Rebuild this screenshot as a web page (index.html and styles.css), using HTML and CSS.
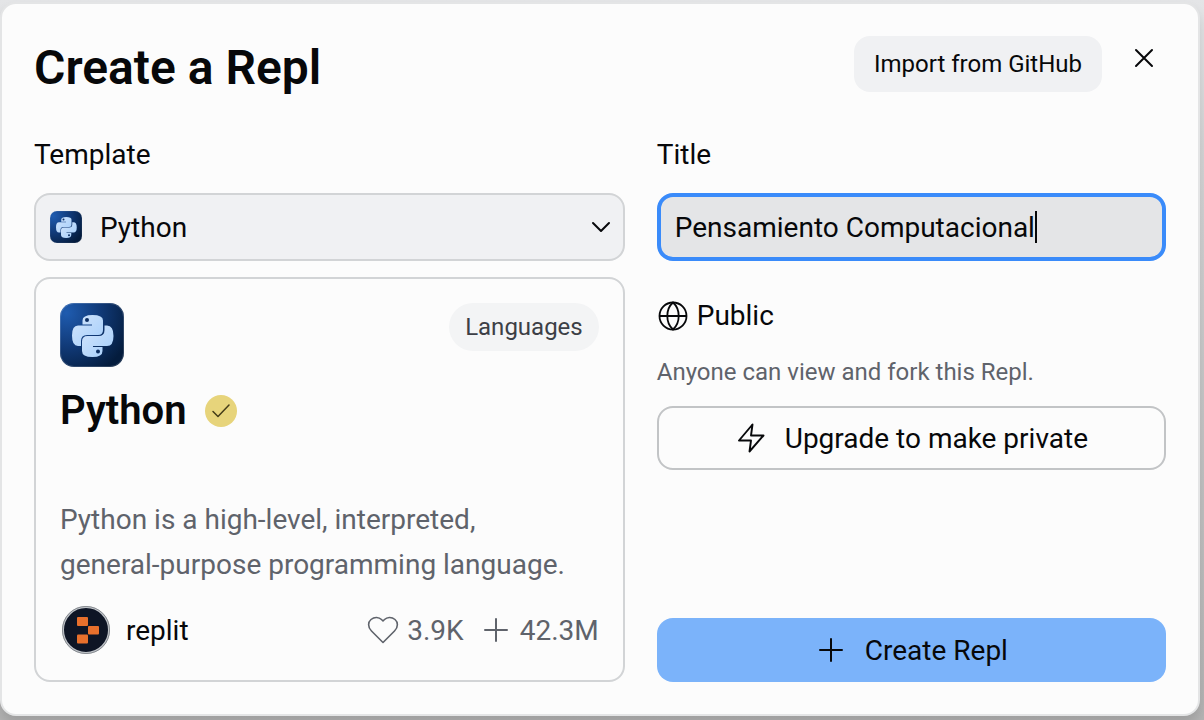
FILE: index.html
```html
<!DOCTYPE html>
<html lang="en">
<head>
<meta charset="utf-8">
<meta name="viewport" content="width=device-width, initial-scale=1">
<title>Create a Repl</title>
<link rel="stylesheet" href="styles.css">
</head>
<body>
<svg class="defs" aria-hidden="true">
  <defs>
    <radialGradient id="tile" cx="0.1" cy="0.15" r="1.05">
      <stop offset="0" stop-color="#1f5cb0"/>
      <stop offset="0.5" stop-color="#113a78"/>
      <stop offset="1" stop-color="#041c3d"/>
    </radialGradient>
    <linearGradient id="snake" x1="0" y1="0" x2="1" y2="1">
      <stop offset="0" stop-color="#d3e5fb"/>
      <stop offset="1" stop-color="#a4cefb"/>
    </linearGradient>
    <symbol id="python" viewBox="0 0 64 64">
      <rect width="64" height="64" rx="14" fill="url(#tile)"/>
      <rect x="0.5" y="0.5" width="63" height="63" rx="13.5" fill="none" stroke="#fff" stroke-opacity="0.16"/>
      <path fill="url(#snake)" d="M22.500 21.500V17.500Q22.500 12 32.500 12Q43 12 43 17.500V27Q43 32 38 32H27Q21 32 21 38V43H18Q12 43 12 32.500Q12 22.500 18 22.500H32V21.500Z"/>
      <path fill="url(#snake)" d="M44.500 22.500H47Q53.500 22.500 53.500 33Q53.500 43 47 43H33V44H42.500V48Q42.500 54 32.500 54Q22 54 22 48V38.500Q22 33 27.500 33H38.500Q44.500 33 44.500 27Z"/>
      <circle cx="27" cy="17" r="2" fill="#0c2e61"/>
      <circle cx="38" cy="48.500" r="2" fill="#0c2e61"/>
    </symbol>
  </defs>
</svg>
<main class="modal" role="dialog" aria-labelledby="dialog-title">
  <header class="header">
    <h1 class="heading" id="dialog-title">Create a Repl</h1>
    <button class="import" type="button">Import from GitHub</button>
    <button class="close" type="button" aria-label="Close">
      <svg width="20" height="20" viewBox="0 0 20 20" fill="none" stroke="currentColor" stroke-width="2" stroke-linecap="round"><path d="M2 2L18 18M18 2L2 18"/></svg>
    </button>
  </header>
  <form class="columns">
    <section class="column">
      <label class="label" for="template">Template</label>
      <div class="picker">
        <select class="select" id="template"><option>Python</option></select>
        <svg class="picker-icon" width="32" height="32" aria-hidden="true"><use href="#python"/></svg>
        <svg class="picker-arrow" width="20" height="12" viewBox="0 0 20 12" fill="none" stroke="currentColor" stroke-width="2" stroke-linecap="round" stroke-linejoin="round" aria-hidden="true"><path d="M2 2L10 10L18 2"/></svg>
      </div>
      <article class="card">
        <div class="card-top">
          <svg width="64" height="64" aria-hidden="true"><use href="#python"/></svg>
          <span class="tag">Languages</span>
        </div>
        <div class="card-title">
          <h2 class="name">Python</h2>
          <svg width="32" height="32" viewBox="0 0 32 32" fill="none" role="img" aria-label="Official"><circle cx="16" cy="16" r="16" fill="#e7d47b"/><path d="M8 16.500L13 21.500L24 10" stroke="#443c18" stroke-width="1.500" stroke-linecap="round" stroke-linejoin="round"/></svg>
        </div>
        <p class="description">Python is a high-level, interpreted, <span class="keep">general-purpose</span> programming language.</p>
        <footer class="card-footer">
          <svg width="48" height="48" viewBox="0 0 48 48" aria-hidden="true"><circle cx="24" cy="24" r="23" fill="#0e1525" stroke="#bfc3c8" stroke-width="2"/><circle cx="24" cy="24" r="23.600" fill="none" stroke="#6d7177" stroke-width="0.700"/><g fill="#e8702c"><rect x="15" y="11" width="11" height="9" rx="1"/><rect x="26" y="20" width="11" height="8.500" rx="1"/><rect x="15" y="28.500" width="11" height="9" rx="1"/></g></svg>
          <span class="author">replit</span>
          <span class="stat">
            <svg width="32" height="32" viewBox="0 0 32 32" fill="none" stroke="currentColor" stroke-width="1.600" stroke-linejoin="round" role="img" aria-label="Likes"><path d="M16 28.500L4.500 17C0.500 13 1 8 4 5.500C7.500 2.500 12 3 14.500 5.500L16 7L17.500 5.500C20 3 24.500 2.500 28 5.500C31 8 31.500 13 27.500 17Z"/></svg>
            3.9K
          </span>
          <span class="stat">
            <svg width="32" height="32" viewBox="0 0 32 32" fill="none" stroke="currentColor" stroke-width="2" stroke-linecap="round" role="img" aria-label="Runs"><path d="M16 5V27M5 16H27"/></svg>
            42.3M
          </span>
        </footer>
      </article>
    </section>
    <section class="column">
      <label class="label" for="title">Title</label>
      <div class="field">
        <input class="input" id="title" type="text" value="Pensamiento Computacional" spellcheck="false">
        <span class="caret"></span>
      </div>
      <div class="privacy">
        <svg width="32" height="32" viewBox="0 0 32 32" fill="none" stroke="currentColor" stroke-width="1.800" aria-hidden="true"><circle cx="16" cy="16" r="13.500"/><path d="M2.500 16H29.500M16 2.500C12 6 10.300 11 10.300 16S12 26 16 29.500C20 26 21.700 21 21.700 16S20 6 16 2.500Z"/></svg>
        Public
      </div>
      <p class="hint">Anyone can view and fork this Repl.</p>
      <button class="button upgrade" type="button">
        <svg width="32" height="32" viewBox="0 0 32 32" fill="none" stroke="currentColor" stroke-width="1.900" stroke-linejoin="round" aria-hidden="true"><path d="M17.500 2.500L4 18.500H16L14.500 29.500L28.500 13.500H16Z"/></svg>
        Upgrade to make private
      </button>
      <button class="button create" type="submit">
        <svg width="32" height="32" viewBox="0 0 32 32" fill="none" stroke="currentColor" stroke-width="2" stroke-linecap="round" aria-hidden="true"><path d="M16 5V27M5 16H27"/></svg>
        Create Repl
      </button>
    </section>
  </form>
</main>
</body>
</html>
```

FILE: styles.css
```css
* {
  box-sizing: border-box;
}

body {
  margin: 0;
  min-height: 100vh;
  display: flex;
  padding: 2px 4px 4px 0;
  background: linear-gradient(#e4e5e7, #d6d6d7 20%, #b4b4b4);
  color: #07080a;
  font-family: Roboto, "Liberation Sans", sans-serif;
  font-size: 28px;
  line-height: 45px;
}

button,
input,
select {
  font: inherit;
  color: inherit;
}

button {
  cursor: pointer;
}

h1,
h2,
p {
  margin: 0;
}

svg {
  display: block;
  flex: none;
}

.defs {
  position: absolute;
  width: 0;
  height: 0;
}

.modal {
  flex: 1;
  display: flex;
  flex-direction: column;
  gap: 32px;
  padding: 32px;
  background: #fcfcfc;
  border: 2px solid #e4e5e6;
  border-radius: 16px;
  box-shadow: 0 8px 12px rgba(0, 0, 0, 0.12);
}

.header {
  display: flex;
  align-items: flex-start;
}

.heading {
  flex: 1;
  font-size: 48px;
  line-height: 64px;
  font-weight: 600;
}

.import {
  height: 56px;
  padding: 0 20px;
  border: 0;
  border-radius: 16px;
  background: #f0f1f3;
  font-size: 24px;
}

.close {
  display: flex;
  margin-left: 20px;
  padding: 12px;
  border: 0;
  background: none;
}

.columns {
  flex: 1;
  display: grid;
  grid-template-columns: 1.16fr 1fr;
  gap: 32px;
}

.column {
  display: flex;
  flex-direction: column;
  gap: 16px;
  min-width: 0;
}

.picker {
  position: relative;
}

.select {
  display: block;
  width: 100%;
  height: 68px;
  padding: 0 64px;
  appearance: none;
  border: 2px solid #d2d4d6;
  border-radius: 16px;
  background: #f0f1f3;
}

.picker-icon,
.picker-arrow {
  position: absolute;
  pointer-events: none;
}

.picker-icon {
  left: 16px;
  top: 18px;
}

.picker-arrow {
  right: 14px;
  top: 28px;
}

.card {
  flex: 1;
  display: flex;
  flex-direction: column;
  padding: 24px;
  border: 2px solid #d2d4d6;
  border-radius: 16px;
}

.card-top {
  display: flex;
  justify-content: space-between;
  align-items: flex-start;
}

.tag {
  padding: 0 16px;
  border-radius: 24px;
  background: #f3f4f5;
  color: #3c3f46;
  font-size: 24px;
  line-height: 48px;
}

.card-title {
  display: flex;
  align-items: center;
  gap: 18px;
  margin: 16px 0 58px;
}

.name {
  font-size: 40px;
  line-height: 56px;
  font-weight: 600;
}

.description {
  color: #5f636b;
}

.keep {
  white-space: nowrap;
}

.card-footer {
  display: flex;
  align-items: center;
  gap: 16px;
  margin-top: auto;
  padding: 0 0 2px 2px;
}

.author {
  flex: 1;
}

.stat {
  display: flex;
  align-items: center;
  gap: 8px;
  color: #5f636b;
}

.field {
  display: flex;
  align-items: center;
  height: 68px;
  padding: 0 14px;
  border: 4px solid #3a8bfa;
  border-radius: 16px;
  background: #e4e5e7;
}

.input {
  field-sizing: content;
  max-width: 100%;
  padding: 0;
  border: 0;
  outline: 0;
  background: none;
}

.caret {
  width: 2px;
  height: 32px;
  background: #07080a;
}

.privacy {
  display: flex;
  align-items: center;
  gap: 8px;
  margin-top: 16px;
}

.hint {
  color: #5f636b;
  font-size: 24px;
  line-height: 36px;
}

.button {
  display: flex;
  align-items: center;
  justify-content: center;
  gap: 18px;
  height: 64px;
  border-radius: 16px;
}

.upgrade {
  border: 2px solid #c2c4c6;
  background: #fcfcfc;
}

.create {
  margin-top: auto;
  border: 0;
  background: #7bb3fa;
}
```
